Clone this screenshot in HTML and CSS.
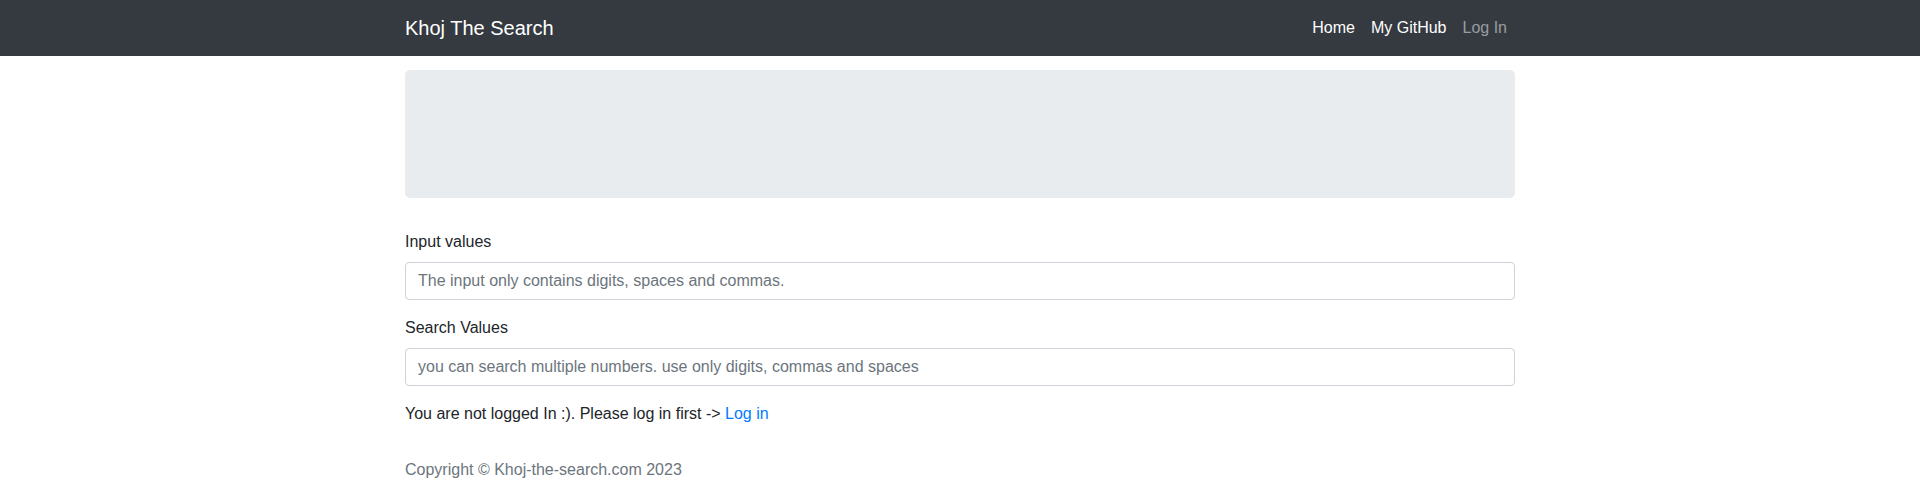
FILE: index.html
```html
<!DOCTYPE html>
<html lang="en">
<head>
<meta charset="utf-8">
<title>Khoj The Search</title>
<link rel="stylesheet" href="styles.css">
</head>
<body>
<nav class="navbar">
  <div class="container nav-inner">
    <a class="brand" href="#">Khoj The Search</a>
    <ul class="nav-links">
      <li><a class="nav-link active" href="#">Home</a></li>
      <li><a class="nav-link active" href="#">My GitHub</a></li>
      <li><a class="nav-link" href="#">Log In</a></li>
    </ul>
  </div>
</nav>
<main class="container main">
  <div class="jumbotron"></div>
  <form class="form">
    <div class="form-group">
      <label class="label" for="inp">Input values</label>
      <input class="form-control" id="inp" type="text" placeholder="The input only contains digits, spaces and commas.">
    </div>
    <div class="form-group">
      <label class="label" for="srch">Search Values</label>
      <input class="form-control" id="srch" type="text" placeholder="you can search multiple numbers. use only digits, commas and spaces">
    </div>
  </form>
  <p class="notice">You are not logged In :). Please log in first -&gt; <a class="link" href="#">Log in</a></p>
  <footer class="footer">Copyright © Khoj-the-search.com 2023</footer>
</main>
</body>
</html>
```
FILE: styles.css
```css
* { box-sizing: border-box; }
html, body { margin: 0; padding: 0; }
body {
  font-family: "Liberation Sans", Arial, Helvetica, sans-serif;
  font-size: 16px;
  line-height: 1.5;
  color: #212529;
  background: #fff;
}
.container {
  width: 1140px;
  margin: 0 auto;
  padding: 0 15px;
}
.navbar {
  background: #343a40;
  padding: 8px 0;
}
.nav-inner {
  display: flex;
  align-items: center;
  justify-content: space-between;
}
.brand {
  color: #fff;
  text-decoration: none;
  font-size: 20px;
  line-height: 30px;
  padding: 5px 0;
  margin-right: 16px;
}
.nav-links {
  list-style: none;
  margin: 0;
  padding: 0;
  display: flex;
}
.nav-link {
  display: block;
  padding: 8px;
  color: rgba(255,255,255,.5);
  text-decoration: none;
  line-height: 24px;
}
.nav-link.active { color: #fff; }
.main { padding-top: 14px; }
.jumbotron {
  background: #e9ecef;
  border-radius: 4.8px;
  height: 128px;
  margin-bottom: 32px;
}
.form { margin: 0; }
.form-group { margin-bottom: 16px; }
.label {
  display: inline-block;
  margin-bottom: 8px;
}
.form-control {
  display: block;
  width: 100%;
  height: 38px;
  padding: 6px 12px;
  font-family: inherit;
  font-size: 16px;
  line-height: 1.5;
  color: #495057;
  background: #fff;
  border: 1px solid #ced4da;
  border-radius: 4px;
  outline: none;
}
.form-control::placeholder { color: #6c757d; opacity: 1; }
.notice { margin: 0 0 16px; }
.link { color: #007bff; text-decoration: none; }
.footer {
  color: #6c757d;
  padding-top: 16px;
}
```
